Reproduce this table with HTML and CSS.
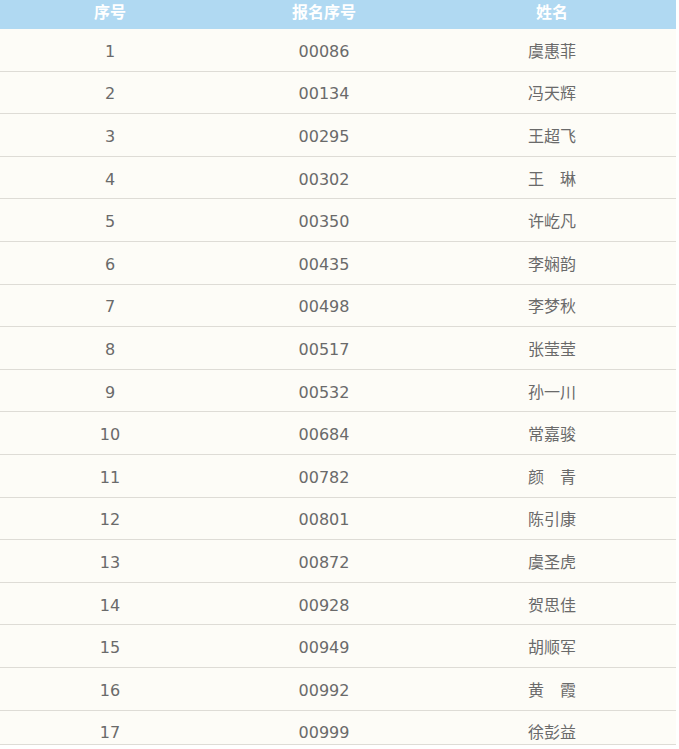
FILE: index.html
```html
<!DOCTYPE html>
<html lang="zh">
<head>
<meta charset="utf-8">
<link rel="stylesheet" href="styles.css">
</head>
<body>
<div class="frame">
<div class="list">
  <div class="row head"><div>序号</div><div>报名序号</div><div>姓名</div></div>
  <div class="row"><div>1</div><div>00086</div><div>虞惠菲</div></div>
  <div class="row"><div>2</div><div>00134</div><div>冯天辉</div></div>
  <div class="row"><div>3</div><div>00295</div><div>王超飞</div></div>
  <div class="row"><div>4</div><div>00302</div><div>王　琳</div></div>
  <div class="row"><div>5</div><div>00350</div><div>许屹凡</div></div>
  <div class="row"><div>6</div><div>00435</div><div>李娴韵</div></div>
  <div class="row"><div>7</div><div>00498</div><div>李梦秋</div></div>
  <div class="row"><div>8</div><div>00517</div><div>张莹莹</div></div>
  <div class="row"><div>9</div><div>00532</div><div>孙一川</div></div>
  <div class="row"><div>10</div><div>00684</div><div>常嘉骏</div></div>
  <div class="row"><div>11</div><div>00782</div><div>颜　青</div></div>
  <div class="row"><div>12</div><div>00801</div><div>陈引康</div></div>
  <div class="row"><div>13</div><div>00872</div><div>虞圣虎</div></div>
  <div class="row"><div>14</div><div>00928</div><div>贺思佳</div></div>
  <div class="row"><div>15</div><div>00949</div><div>胡顺军</div></div>
  <div class="row"><div>16</div><div>00992</div><div>黄　霞</div></div>
  <div class="row"><div>17</div><div>00999</div><div>徐彭益</div></div>
</div>
</div>
</body>
</html>
```

FILE: styles.css
```css
html, body {
  margin: 0;
  padding: 0;
  background: #ffffff;
}
.frame {
  width: 676px;
  height: 744px;
  overflow: hidden;
  border-bottom: 1px solid #dedcd6;
  background: #fdfcf7;
}
.list {
  font-family: "DejaVu Sans", "Noto Sans CJK SC", sans-serif;
  font-size: 16px;
  color: #6a6a6a;
}
.row {
  display: grid;
  grid-template-columns: 220px 208px 248px;
  height: 42.6px;
  box-sizing: border-box;
  border-bottom: 1px solid #dedcd6;
  align-items: center;
  text-align: center;
}
.row > div {
  line-height: 1;
  padding-top: 4px;
}
.head {
  height: 29px;
  background: #b0d9f2;
  color: #ffffff;
  font-weight: bold;
  border-bottom: none;
}
.head > div {
  padding-top: 0;
  padding-bottom: 4px;
}
```
